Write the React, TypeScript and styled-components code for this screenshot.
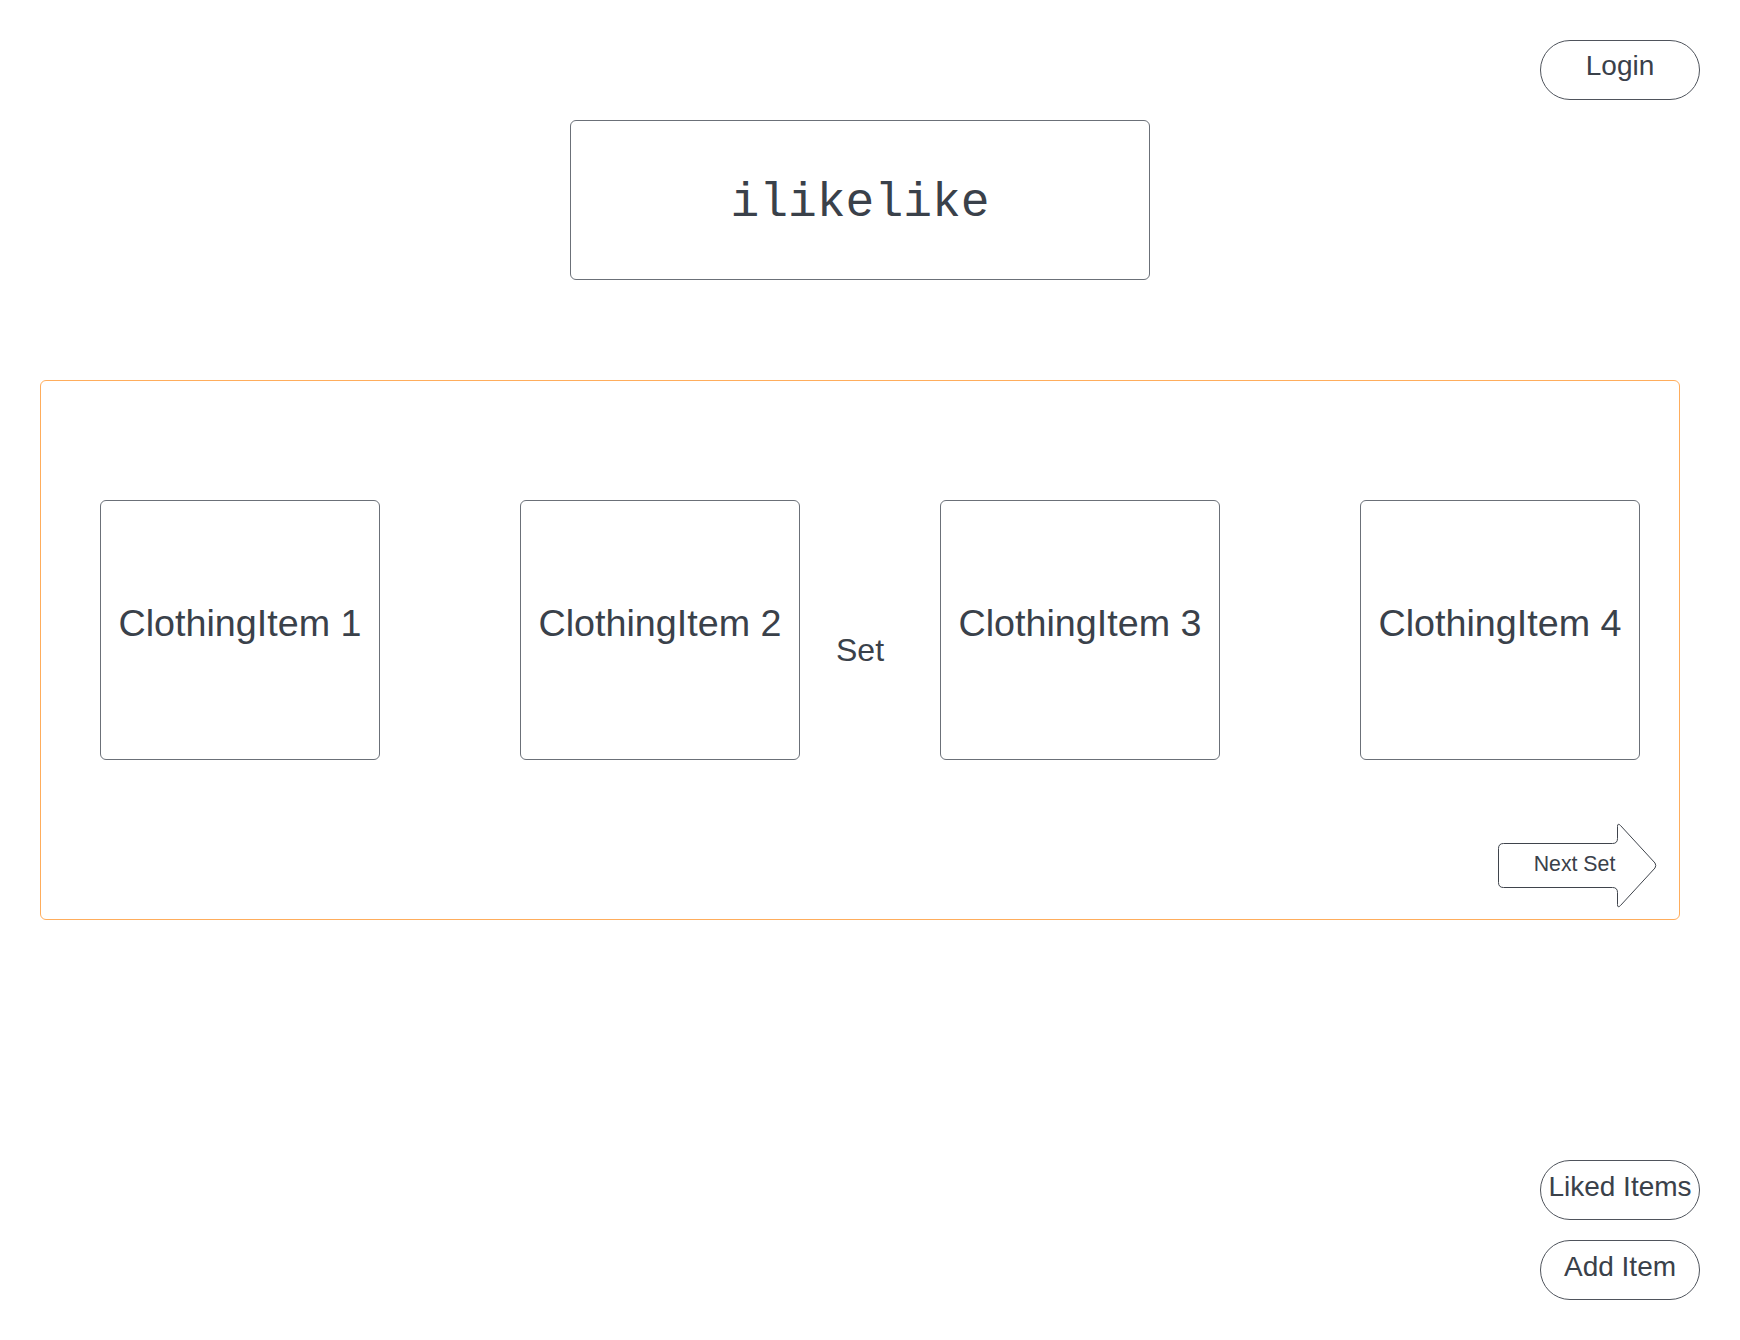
import React from "react";
import styled, { createGlobalStyle } from "styled-components";

const GlobalStyle = createGlobalStyle`
  html, body {
    margin: 0;
    padding: 0;
    background: #ffffff;
  }
  body {
    font-family: "Liberation Sans", Arial, sans-serif;
    color: #3a414a;
  }
`;

const Page = styled.div`
  width: 1740px;
  min-height: 1340px;
  box-sizing: border-box;
  padding: 40px 40px 40px 40px;
  display: flex;
  flex-direction: column;
`;

const TopBar = styled.div`
  display: flex;
  justify-content: flex-end;
`;

const Pill = styled.button<{ $lift?: number }>`
  width: 160px;
  height: 60px;
  box-sizing: border-box;
  border: 1px solid #4f545c;
  border-radius: 30px;
  background: #ffffff;
  color: #3a414a;
  font-family: "Liberation Sans", Arial, sans-serif;
  font-size: 28px;
  line-height: 1;
  padding: 0 0 ${(p) => p.$lift ?? 7}px 0;
  display: flex;
  align-items: center;
  justify-content: center;
  white-space: nowrap;
  cursor: pointer;
  flex-shrink: 0;
`;

const Main = styled.div`
  width: 1640px;
  display: flex;
  flex-direction: column;
  align-items: center;
`;

const TitleBox = styled.div`
  margin-top: 20px;
  width: 580px;
  height: 160px;
  box-sizing: border-box;
  border: 1px solid #6b7078;
  border-radius: 6px;
  display: flex;
  align-items: center;
  justify-content: center;
  padding-top: 5px;
  font-family: "Liberation Mono", "Courier New", monospace;
  font-size: 48px;
  line-height: 1;
  color: #3a414a;
  flex-shrink: 0;
`;

const SetPanel = styled.section`
  margin-top: 100px;
  width: 1640px;
  height: 540px;
  box-sizing: border-box;
  border: 1px solid #ffad5c;
  border-radius: 6px;
  padding: 119px 21px 12px 59px;
  display: flex;
  flex-direction: column;
  flex-shrink: 0;
`;

const ItemsRow = styled.div`
  display: grid;
  grid-template-columns: 280px 140px 280px 140px 280px 140px 280px;
  height: 260px;
  flex-shrink: 0;
`;

const ItemCard = styled.div`
  box-sizing: border-box;
  border: 1px solid #6b7078;
  border-radius: 6px;
  display: flex;
  align-items: center;
  justify-content: center;
  padding-bottom: 12px;
  font-size: 37.7px;
  line-height: 1;
  white-space: nowrap;
  color: #3a414a;
`;

const Spacer = styled.div``;

const SetLabel = styled.div`
  display: flex;
  align-items: center;
  justify-content: center;
  padding: 40px 20px 0 0;
  font-size: 32px;
  line-height: 1;
  color: #3a414a;
`;

const ArrowRow = styled.div`
  margin-top: 63px;
  display: flex;
  justify-content: flex-end;
  flex-shrink: 0;
`;

const ArrowButton = styled.button`
  width: 160px;
  height: 84px;
  padding: 0;
  border: none;
  background: transparent;
  cursor: pointer;
  display: block;

  svg {
    display: block;
    overflow: visible;
  }
  text {
    font-family: "Liberation Sans", Arial, sans-serif;
    font-size: 21.3px;
    fill: #3a414a;
  }
`;

const BottomActions = styled.div`
  margin-top: 240px;
  display: flex;
  flex-direction: column;
  align-items: flex-end;
  gap: 20px;
`;

const items = ["ClothingItem 1", "ClothingItem 2", "ClothingItem 3", "ClothingItem 4"];

export default function App() {
  return (
    <>
      <GlobalStyle />
      <Page>
        <TopBar>
          <Pill $lift={9}>Login</Pill>
        </TopBar>
        <Main>
          <TitleBox>ilikelike</TitleBox>
          <SetPanel>
            <ItemsRow>
              <ItemCard>{items[0]}</ItemCard>
              <Spacer />
              <ItemCard>{items[1]}</ItemCard>
              <SetLabel>Set</SetLabel>
              <ItemCard>{items[2]}</ItemCard>
              <Spacer />
              <ItemCard>{items[3]}</ItemCard>
            </ItemsRow>
            <ArrowRow>
              <ArrowButton>
                <svg width="160" height="84" viewBox="-0.5 -0.5 160 84">
                  <path
                    d="M5,20 H114 Q119,20 119,15 V3 Q119,-1 122,2 L156.5,39.5 Q158,42 156.5,44.5 L122,82 Q119,85 119,81 V69 Q119,64 114,64 H5 Q0,64 0,59 V25 Q0,20 5,20 Z"
                    fill="#ffffff"
                    stroke="#3f444c"
                    strokeWidth="1"
                  />
                  <text x="76" y="47" textAnchor="middle">Next Set</text>
                </svg>
              </ArrowButton>
            </ArrowRow>
          </SetPanel>
        </Main>
        <BottomActions>
          <Pill>Liked Items</Pill>
          <Pill>Add Item</Pill>
        </BottomActions>
      </Page>
    </>
  );
}
